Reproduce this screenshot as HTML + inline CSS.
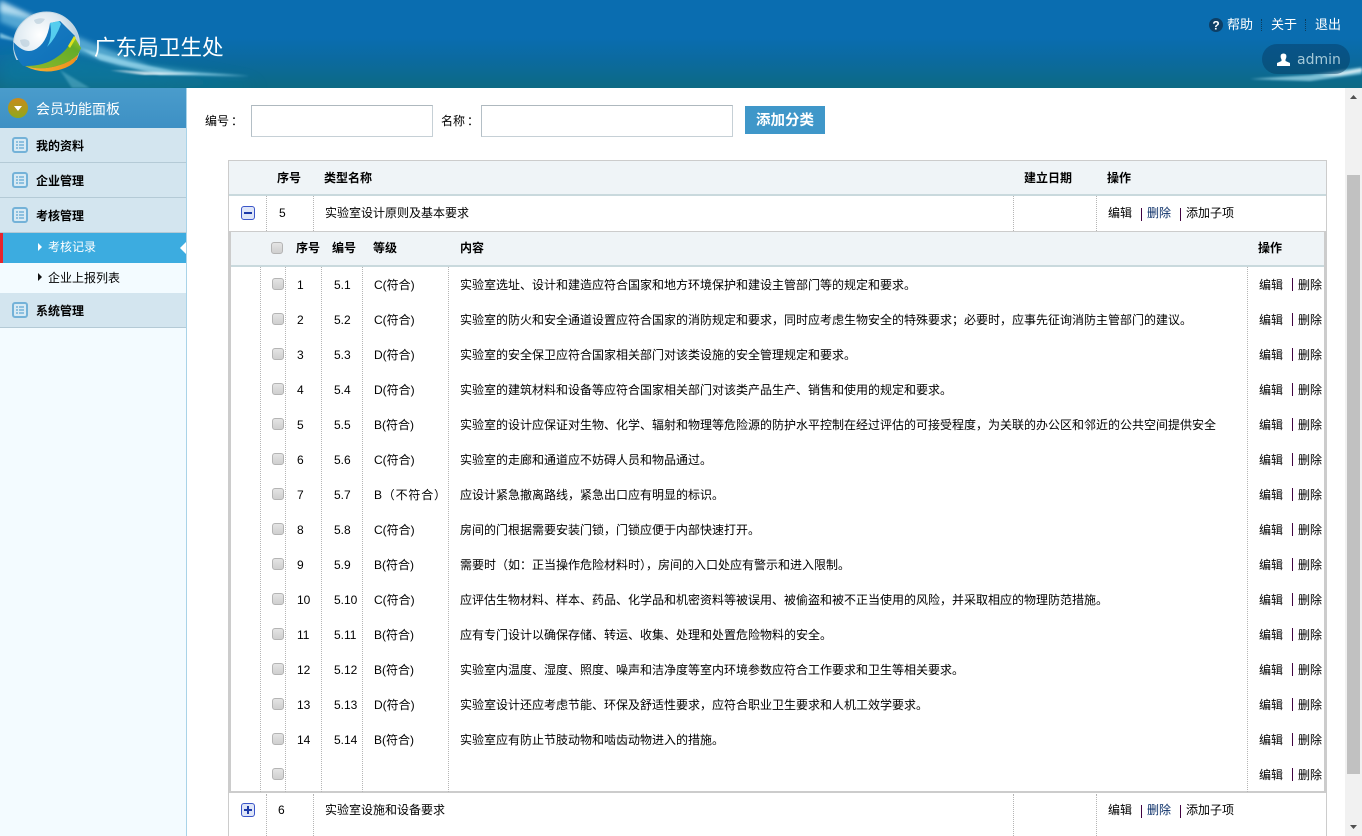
<!DOCTYPE html>
<html lang="zh"><head><meta charset="utf-8"><title>广东局卫生处</title>
<style>
*{box-sizing:border-box;margin:0;padding:0}
html,body{width:1362px;height:836px;overflow:hidden;background:#fff}
body{position:relative;font:12px/16px "Liberation Sans","Noto Sans CJK SC",sans-serif;color:#000}
.t{position:absolute;white-space:nowrap}
#top{position:absolute;left:0;top:0;width:1362px;height:88px;background:linear-gradient(#0a6db0 0,#0a6db0 38px,#0b6a9f 60px,#0d6a84 88px);overflow:hidden}
#side{position:absolute;left:0;top:88px;width:187px;height:748px;background:#f3fbff;border-right:1px solid #a9d3e8}
.m{position:absolute;left:0;width:186px;height:35px;background:#d3e5ef;border-bottom:1px solid #b4cad6;font-weight:bold;line-height:36px;padding-left:36px}
.m svg{position:absolute;left:12px;top:9px}
.v{position:absolute;width:0;border-left:1px dotted #b5b5b5}
.r{position:absolute;left:0;width:1362px;height:35px;line-height:35px}
.r>*{position:absolute;top:0;white-space:nowrap}
.r .cb,.cb{position:absolute;width:12px;height:12px;background:linear-gradient(#e4e4e4,#cfcfcf);border:1px solid #b4b4b4;border-radius:3px}
.r .cb{left:272px;top:10px}
.n{left:297px}.c{left:334px}.g{left:374px}.x{left:460px}.e{left:1259px}.d{left:1298px}
.s{position:absolute;width:1px;height:13px;background:#400040}
.r .s{left:1292px;top:10px}
.hd{position:absolute;background:#eff4f7}
b{font-weight:bold}
</style></head><body>

<div id="top">
<svg width="1362" height="88" style="position:absolute;left:0;top:0">
<defs>
<filter id="b1"><feGaussianBlur stdDeviation="2.5"/></filter>
<filter id="b2"><feGaussianBlur stdDeviation="1"/></filter>
<filter id="b3"><feGaussianBlur stdDeviation="8"/></filter>
<clipPath id="ballclip"><rect x="0" y="0" width="100" height="60"/></clipPath>
<radialGradient id="ball" cx=".4" cy=".35" r=".7"><stop offset="0" stop-color="#fff"/><stop offset=".55" stop-color="#dbe8f0"/><stop offset="1" stop-color="#9dbdd2"/></radialGradient>
<linearGradient id="gr" x1="0" y1="1" x2="1" y2="0"><stop offset="0" stop-color="#8fb82a"/><stop offset=".75" stop-color="#63ac2a"/><stop offset="1" stop-color="#a8cc1e"/></linearGradient>
<linearGradient id="or" x1="0" y1="0" x2="1" y2="0"><stop offset="0" stop-color="#f5b534"/><stop offset="1" stop-color="#ef8f1c"/></linearGradient>
<linearGradient id="bl" x1="0" y1="0" x2="1" y2="1"><stop offset="0" stop-color="#1b7fc4"/><stop offset="1" stop-color="#0d6fb8"/></linearGradient>
</defs>
<path d="M0 88V55L60 50 260 88Z" fill="#0a7ea3" opacity=".55" filter="url(#b3)"/>
<path d="M0 4L90 42 150 66 250 78 120 66 60 46 0 22Z" fill="#8fd6f0" opacity=".55" filter="url(#b1)"/>
<path d="M0 0L46 22 0 12Z" fill="#d5f0fa" opacity=".75" filter="url(#b1)"/>
<path d="M80 48L130 62 175 71 250 76 160 75 100 60Z" fill="#9fdcf0" opacity=".7" filter="url(#b2)"/>
<path d="M110 70L150 72 200 74 145 75Z" fill="#fff" opacity=".85" filter="url(#b2)"/>
<path d="M0 33L22 42 0 38Z" fill="#a5dff2" opacity=".7" filter="url(#b2)"/>
<path d="M60 70L90 88H72Z" fill="#7cc9de" opacity=".4" filter="url(#b2)"/>
<path d="M1250 79L1310 75 1362 67V74L1310 81Z" fill="#a9e2f2" opacity=".7" filter="url(#b2)"/>
<path d="M1320 76L1345 72 1362 69V71L1340 75Z" fill="#fff" opacity=".9" filter="url(#b2)"/>
<circle cx="46.500" cy="45" r="33" fill="url(#ball)" stroke="#c5d8e4" stroke-width="1" clip-path="url(#ballclip)"/>
<path d="M20 40q6-2 9 1 2 5-3 6-5 0-6-7ZM34 20q6-3 11-1-3 5-7 5-3 0-4-4Z" fill="#a9c2d2" opacity=".5"/>
<path d="M50 23L60 21 75 36Q70 55 50 65L23 66A33 33 0 0 1 13.500 42Q24 54 34 50 47 44 50 23Z" fill="url(#bl)"/>
<path d="M50 23L59 21 61 24Q56 38 47 47 53 36 50 23Z" fill="#55cdee"/>
<path d="M74 36L81 48 78 55Q70 62 60 65 42 71 25 66 45 66 57 57 68 50 74 36Z" fill="url(#gr)"/>
<path d="M74 36L76 38 70 48 68 46Z" fill="#dfe21e"/>
<path d="M25 66Q42 71 60 65 70 62 78 55 77 63 65 68 44 76 25 66Z" fill="url(#or)"/>
</svg>
<div class="t" style="left:94px;top:33px;font-size:21.600px;line-height:30px;color:#fff">广东局卫生处</div>
<svg width="14" height="14" style="position:absolute;left:1209px;top:18px"><circle cx="7" cy="7" r="7" fill="#0d3f66"/><text x="7" y="11.500" text-anchor="middle" font-family="Liberation Sans" font-weight="bold" font-size="12" fill="#fff">?</text></svg>
<div class="t" style="left:1227px;top:17px;font-size:13px;color:#fff">帮助</div>
<div class="t" style="left:1271px;top:17px;font-size:13px;color:#fff">关于</div>
<div class="t" style="left:1315px;top:17px;font-size:13px;color:#fff">退出</div>
<div class="v" style="left:1261px;top:19px;height:12px;border-left-color:#0b3d5e"></div>
<div class="v" style="left:1305px;top:19px;height:12px;border-left-color:#0b3d5e"></div>
<div style="position:absolute;left:1262px;top:44px;width:88px;height:30px;border-radius:15px;background:rgba(5,55,95,.45)"></div>
<svg width="14" height="13" style="position:absolute;left:1277px;top:53px"><path d="M4 1.500Q6.500-.500 9 1.500 10 4 8.500 6.500V8L13 10V13H0V10L4.500 8V6.500Q3 4 4 1.500Z" fill="#fff"/></svg>
<div class="t" style="left:1297px;top:52px;font:14px/17px 'DejaVu Sans',sans-serif;color:#a4c9d8">admin</div>
</div>

<div id="side">
<div style="position:absolute;left:0;top:0;width:186px;height:40px;background:linear-gradient(#4a9ccc,#3d90c4);color:#fff;font-size:14px;line-height:42px;padding-left:36px">会员功能面板</div>
<svg width="22" height="22" style="position:absolute;left:7px;top:9px"><defs><linearGradient id="o" x1="0" y1="0" x2="0" y2="1"><stop offset="0" stop-color="#c98a1c"/><stop offset="1" stop-color="#8fa81c"/></linearGradient></defs><circle cx="11" cy="11" r="10" fill="url(#o)"/><path d="M7 9h8l-4 5z" fill="#fff"/></svg>
<div class="m" style="top:40px"><svg width="16" height="16"><rect x="1" y="1" width="14" height="14" rx="2" fill="#d8eaf4" stroke="#74b2d8" stroke-width="2"/><path d="M4 5h2M4 8h2M4 11h2M7 5h5M7 8h5M7 11h5" stroke="#74b2d8" stroke-width="1.500"/></svg>我的资料</div>
<div class="m" style="top:75px"><svg width="16" height="16"><rect x="1" y="1" width="14" height="14" rx="2" fill="#d8eaf4" stroke="#74b2d8" stroke-width="2"/><path d="M4 5h2M4 8h2M4 11h2M7 5h5M7 8h5M7 11h5" stroke="#74b2d8" stroke-width="1.500"/></svg>企业管理</div>
<div class="m" style="top:110px"><svg width="16" height="16"><rect x="1" y="1" width="14" height="14" rx="2" fill="#d8eaf4" stroke="#74b2d8" stroke-width="2"/><path d="M4 5h2M4 8h2M4 11h2M7 5h5M7 8h5M7 11h5" stroke="#74b2d8" stroke-width="1.500"/></svg>考核管理</div>
<div style="position:absolute;left:0;top:145px;width:186px;height:30px;background:#3cace0;border-left:3px solid #e8242c;color:#fff;line-height:29px;padding-left:45px">考核记录</div>
<svg width="4" height="8" style="position:absolute;left:38px;top:155px"><path d="M0 0l4 4-4 4z" fill="#fff"/></svg>
<svg width="6" height="12" style="position:absolute;left:180px;top:154px"><path d="M6 0L0 6l6 6z" fill="#fff"/></svg>
<div class="t" style="left:48px;top:182px">企业上报列表</div>
<svg width="4" height="8" style="position:absolute;left:38px;top:185px"><path d="M0 0l4 4-4 4z" fill="#111"/></svg>
<div class="m" style="top:205px"><svg width="16" height="16"><rect x="1" y="1" width="14" height="14" rx="2" fill="#d8eaf4" stroke="#74b2d8" stroke-width="2"/><path d="M4 5h2M4 8h2M4 11h2M7 5h5M7 8h5M7 11h5" stroke="#74b2d8" stroke-width="1.500"/></svg>系统管理</div>
</div>

<div class="t" style="left:205px;top:113px">编号<span style="position:relative;left:2px">：</span></div>
<div style="position:absolute;left:251px;top:105px;width:182px;height:32px;border:1px solid #c6d0d6;border-top-color:#aeb8be;border-left-color:#b4bfc6"></div>
<div class="t" style="left:441px;top:113px">名称<span style="position:relative;left:2px">：</span></div>
<div style="position:absolute;left:481px;top:105px;width:252px;height:32px;border:1px solid #c6d0d6;border-top-color:#aeb8be;border-left-color:#b4bfc6"></div>
<div style="position:absolute;left:745px;top:106px;width:80px;height:28px;background:#3f97c9;color:#fff;font-size:14.500px;font-weight:bold;line-height:30px;text-align:center">添加分类</div>

<!-- outer table -->
<div style="position:absolute;left:228px;top:160px;width:1099px;height:676px;border:1px solid #cccccc;border-bottom:0"></div>
<div class="hd" style="left:229px;top:161px;width:1097px;height:35px;border-bottom:2px solid #c9d9dd"></div>
<div class="t" style="left:277px;top:170px"><b>序号</b></div>
<div class="t" style="left:324px;top:170px"><b>类型名称</b></div>
<div class="t" style="left:1024px;top:170px"><b>建立日期</b></div>
<div class="t" style="left:1107px;top:170px"><b>操作</b></div>

<div class="v" style="left:266px;top:196px;height:35px"></div>
<div class="v" style="left:313px;top:196px;height:35px"></div>
<div class="v" style="left:1013px;top:196px;height:35px"></div>
<div class="v" style="left:1096px;top:196px;height:35px"></div>
<svg width="14" height="14" style="position:absolute;left:241px;top:206px"><rect x=".5" y=".5" width="13" height="13" rx="2.500" fill="#dfe6f8" stroke="#3a55c8"/><path d="M3 7h8" stroke="#1c3aa8" stroke-width="2"/></svg>
<div class="r" style="top:196px"><span style="left:279px;font-size:12px">5</span><span style="left:325px">实验室设计原则及基本要求</span><span style="left:1108px">编辑</span><i class="s" style="left:1141px;top:12px"></i><span style="left:1147px;color:#0b2f68">删除</span><i class="s" style="left:1180px;top:12px"></i><span style="left:1186px">添加子项</span></div>

<!-- sub table -->
<div style="position:absolute;left:229px;top:231px;width:1097px;height:562px;border-top:1px solid #cccccc;border-bottom:2px solid #cccccc;border-left:2px solid #cccccc;border-right:2px solid #cccccc"></div>
<div class="hd" style="left:231px;top:232px;width:1093px;height:35px;border-bottom:2px solid #c9d9dd"></div>
<div class="cb" style="left:271px;top:242px"></div>
<div class="t" style="left:296px;top:240px"><b>序号</b></div>
<div class="t" style="left:332px;top:240px"><b>编号</b></div>
<div class="t" style="left:373px;top:240px"><b>等级</b></div>
<div class="t" style="left:460px;top:240px"><b>内容</b></div>
<div class="t" style="left:1258px;top:240px"><b>操作</b></div>
<div class="v" style="left:260px;top:267px;height:525px"></div>
<div class="v" style="left:285px;top:267px;height:525px"></div>
<div class="v" style="left:321px;top:267px;height:525px"></div>
<div class="v" style="left:362px;top:267px;height:525px"></div>
<div class="v" style="left:448px;top:267px;height:525px"></div>
<div class="v" style="left:1247px;top:267px;height:525px"></div>

<div class="r" style="top:268px"><i class="cb"></i><span class="n">1</span><span class="c">5.1</span><span class="g">C(符合)</span><span class="x">实验室选址、设计和建造应符合国家和地方环境保护和建设主管部门等的规定和要求。</span><span class="e">编辑</span><i class="s"></i><span class="d">删除</span></div>
<div class="r" style="top:303px"><i class="cb"></i><span class="n">2</span><span class="c">5.2</span><span class="g">C(符合)</span><span class="x">实验室的防火和安全通道设置应符合国家的消防规定和要求，同时应考虑生物安全的特殊要求；必要时，应事先征询消防主管部门的建议。</span><span class="e">编辑</span><i class="s"></i><span class="d">删除</span></div>
<div class="r" style="top:338px"><i class="cb"></i><span class="n">3</span><span class="c">5.3</span><span class="g">D(符合)</span><span class="x">实验室的安全保卫应符合国家相关部门对该类设施的安全管理规定和要求。</span><span class="e">编辑</span><i class="s"></i><span class="d">删除</span></div>
<div class="r" style="top:373px"><i class="cb"></i><span class="n">4</span><span class="c">5.4</span><span class="g">D(符合)</span><span class="x">实验室的建筑材料和设备等应符合国家相关部门对该类产品生产、销售和使用的规定和要求。</span><span class="e">编辑</span><i class="s"></i><span class="d">删除</span></div>
<div class="r" style="top:408px"><i class="cb"></i><span class="n">5</span><span class="c">5.5</span><span class="g">B(符合)</span><span class="x">实验室的设计应保证对生物、化学、辐射和物理等危险源的防护水平控制在经过评估的可接受程度，为关联的办公区和邻近的公共空间提供安全</span><span class="e">编辑</span><i class="s"></i><span class="d">删除</span></div>
<div class="r" style="top:443px"><i class="cb"></i><span class="n">6</span><span class="c">5.6</span><span class="g">C(符合)</span><span class="x">实验室的走廊和通道应不妨碍人员和物品通过。</span><span class="e">编辑</span><i class="s"></i><span class="d">删除</span></div>
<div class="r" style="top:478px"><i class="cb"></i><span class="n">7</span><span class="c">5.7</span><span class="g" style="letter-spacing:.8px">B（不符合）</span><span class="x">应设计紧急撤离路线，紧急出口应有明显的标识。</span><span class="e">编辑</span><i class="s"></i><span class="d">删除</span></div>
<div class="r" style="top:513px"><i class="cb"></i><span class="n">8</span><span class="c">5.8</span><span class="g">C(符合)</span><span class="x">房间的门根据需要安装门锁，门锁应便于内部快速打开。</span><span class="e">编辑</span><i class="s"></i><span class="d">删除</span></div>
<div class="r" style="top:548px"><i class="cb"></i><span class="n">9</span><span class="c">5.9</span><span class="g">B(符合)</span><span class="x">需要时（如：正当操作危险材料时），房间的入口处应有警示和进入限制。</span><span class="e">编辑</span><i class="s"></i><span class="d">删除</span></div>
<div class="r" style="top:583px"><i class="cb"></i><span class="n">10</span><span class="c">5.10</span><span class="g">C(符合)</span><span class="x">应评估生物材料、样本、药品、化学品和机密资料等被误用、被偷盗和被不正当使用的风险，并采取相应的物理防范措施。</span><span class="e">编辑</span><i class="s"></i><span class="d">删除</span></div>
<div class="r" style="top:618px"><i class="cb"></i><span class="n">11</span><span class="c">5.11</span><span class="g">B(符合)</span><span class="x">应有专门设计以确保存储、转运、收集、处理和处置危险物料的安全。</span><span class="e">编辑</span><i class="s"></i><span class="d">删除</span></div>
<div class="r" style="top:653px"><i class="cb"></i><span class="n">12</span><span class="c">5.12</span><span class="g">B(符合)</span><span class="x">实验室内温度、湿度、照度、噪声和洁净度等室内环境参数应符合工作要求和卫生等相关要求。</span><span class="e">编辑</span><i class="s"></i><span class="d">删除</span></div>
<div class="r" style="top:688px"><i class="cb"></i><span class="n">13</span><span class="c">5.13</span><span class="g">D(符合)</span><span class="x">实验室设计还应考虑节能、环保及舒适性要求，应符合职业卫生要求和人机工效学要求。</span><span class="e">编辑</span><i class="s"></i><span class="d">删除</span></div>
<div class="r" style="top:723px"><i class="cb"></i><span class="n">14</span><span class="c">5.14</span><span class="g">B(符合)</span><span class="x">实验室应有防止节肢动物和啮齿动物进入的措施。</span><span class="e">编辑</span><i class="s"></i><span class="d">删除</span></div>
<div class="r" style="top:758px"><i class="cb"></i><span class="e">编辑</span><i class="s"></i><span class="d">删除</span></div>

<div class="v" style="left:266px;top:794px;height:42px"></div>
<div class="v" style="left:313px;top:794px;height:42px"></div>
<div class="v" style="left:1013px;top:794px;height:42px"></div>
<div class="v" style="left:1096px;top:794px;height:42px"></div>
<svg width="14" height="14" style="position:absolute;left:241px;top:803px"><rect x=".5" y=".5" width="13" height="13" rx="2.500" fill="#dfe6f8" stroke="#3a55c8"/><path d="M3 7h8M7 3v8" stroke="#1c3aa8" stroke-width="2"/></svg>
<div class="r" style="top:793px"><span style="left:278px">6</span><span style="left:325px">实验室设施和设备要求</span><span style="left:1108px">编辑</span><i class="s" style="left:1141px;top:12px"></i><span style="left:1147px;color:#0b2f68">删除</span><i class="s" style="left:1180px;top:12px"></i><span style="left:1186px">添加子项</span></div>

<!-- scrollbar -->
<div style="position:absolute;left:1345px;top:88px;width:17px;height:748px;background:#f1f1f1"></div>
<div style="position:absolute;left:1347px;top:175px;width:13px;height:599px;background:#c1c1c1"></div>
<svg width="17" height="17" style="position:absolute;left:1345px;top:88px"><path d="M5 11l3.500-4 3.500 4z" fill="#505050"/></svg>
<svg width="17" height="17" style="position:absolute;left:1345px;top:819px"><path d="M5 6h7l-3.500 4z" fill="#505050"/></svg>
</body></html>
